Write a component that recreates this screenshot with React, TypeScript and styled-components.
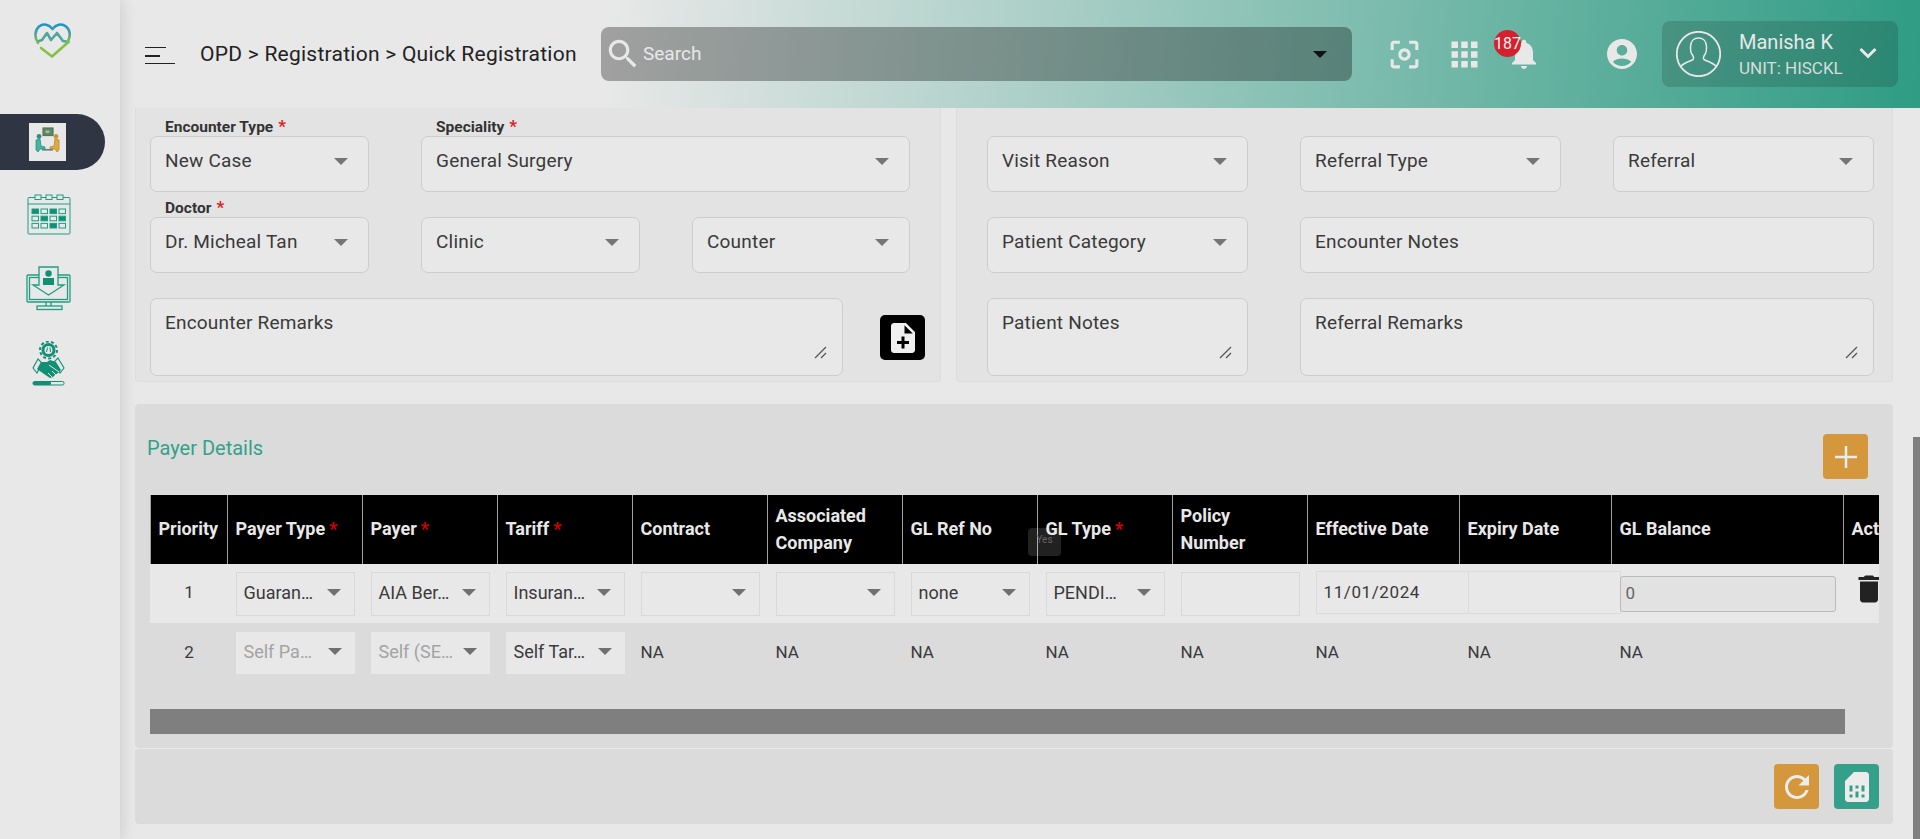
import React from "react";
import styled, { createGlobalStyle } from "styled-components";

const Global = createGlobalStyle`
  html, body { margin: 0; padding: 0; height: 100%; overflow: hidden; background: #e8e8e8; }
  body { font-family: Roboto, "Liberation Sans", sans-serif; color: #333; }
  #root { height: 100%; }
  * { box-sizing: border-box; }
`;

const Page = styled.div`
  display: flex;
  width: 1920px;
  height: 839px;
  position: relative;
  overflow: hidden;
`;
const Sidebar = styled.aside`
  width: 120px;
  flex: none;
  background: #e8e8e8;
  display: flex;
  flex-direction: column;
  padding-top: 23px;
  box-shadow: 2px 0 14px rgba(0, 0, 0, 0.12);
  position: relative;
  z-index: 2;
`;
const Logo = styled.div`
  width: 37px;
  height: 35px;
  margin-left: 34px;
  line-height: 0;
`;
const ActiveNav = styled.div`
  margin-top: 56px;
  width: 105px;
  height: 56px;
  background: #2f3542;
  border-radius: 0 28px 28px 0;
  padding: 9px 0 0 29px;
`;
const ActiveIcon = styled.div`
  width: 37px;
  height: 38px;
  background: #e8e8e8;
  line-height: 0;
`;
const NavIcon = styled.div<{ $top: number; $left: number }>`
  margin-top: ${(p) => p.$top}px;
  margin-left: ${(p) => p.$left}px;
  line-height: 0;
`;
const Main = styled.main`
  flex: 1;
  min-width: 0;
  display: flex;
  flex-direction: column;
`;
const Header = styled.header`
  height: 108px;
  flex: none;
  display: flex;
  align-items: center;
  padding-left: 25px;
  background: linear-gradient(95deg, #e8e8e8 27%, #2f9c84 100%);
`;
const Burger = styled.div`
  width: 30px;
  height: 17px;
  display: flex;
  flex-direction: column;
  justify-content: space-between;
  margin-top: 3px;
`;
const BurgerLine = styled.span<{ $w: number; $h: number }>`
  display: block;
  width: ${(p) => p.$w}px;
  height: ${(p) => p.$h}px;
  background: #222;
`;
const Crumbs = styled.div`
  margin-left: 25px;
  width: 376px;
  font-size: 21px;
  letter-spacing: 0.25px;
  color: #222;
  white-space: nowrap;
`;
const Search = styled.div`
  width: 751px;
  height: 54px;
  margin-left: 25px;
  border-radius: 8px;
  background: rgba(0, 0, 0, 0.31);
  display: flex;
  align-items: center;
  padding: 0 25px 0 3px;
  color: #e8e8e8;
  font-size: 19px;
`;
const SearchText = styled.span`
  flex: 1;
  margin: -2px 0 0 1px;
  color: #e8e8e8;
`;
const SearchCaret = styled.span`
  width: 0;
  height: 0;
  border-left: 7px solid transparent;
  border-right: 7px solid transparent;
  border-top: 7px solid #111;
`;
const HeaderIcon = styled.div<{ $left: number }>`
  margin-left: ${(p) => p.$left}px;
  position: relative;
  line-height: 0;
  color: #e8e8e8;
`;
const ChevronBox = styled(HeaderIcon)`
  margin-top: -3px;
  margin-right: 21px;
`;
const Badge = styled.span`
  position: absolute;
  left: -12px;
  top: -6px;
  width: 27px;
  height: 27px;
  border-radius: 50%;
  background: #d5202e;
  color: #f2f2f2;
  font-size: 16px;
  line-height: 27px;
  text-align: center;
  white-space: nowrap;
`;
const UserBox = styled.div`
  margin-left: 22px;
  width: 236px;
  height: 66px;
  border-radius: 8px;
  background: rgba(0, 0, 0, 0.14);
  display: flex;
  align-items: center;
  padding-left: 14px;
  color: #e8e8e8;
`;
const UserText = styled.div`
  margin-left: 18px;
  flex: 1;
  display: flex;
  flex-direction: column;
`;
const UserName = styled.span`
  font-size: 20px;
  line-height: 26px;
`;
const UserUnit = styled.span`
  font-size: 17px;
  line-height: 22px;
  margin-top: 2px;
  color: #d6dedb;
`;
const Content = styled.div`
  padding-left: 15px;
  width: 1773px;
  display: flex;
  flex-direction: column;
`;
const TopRow = styled.div`
  display: flex;
  gap: 15px;
  height: 274px;
`;
const Panel = styled.section<{ $w: number; $pl: number }>`
  width: ${(p) => p.$w}px;
  background: #e3e3e3;
  border: 1px solid #dddddd;
  border-top: none;
  border-radius: 0 0 4px 4px;
  padding: 28px 0 0 ${(p) => p.$pl - 1}px;
  display: flex;
  flex-direction: column;
  gap: 25px;
`;
const FormRow = styled.div<{ $gap?: number }>`
  display: flex;
  gap: ${(p) => p.$gap ?? 52}px;
`;
const Field = styled.div<{ $w: number; $tall?: boolean }>`
  position: relative;
  width: ${(p) => p.$w}px;
  height: ${(p) => (p.$tall ? 78 : 56)}px;
  flex: none;
  background: #e8e8e8;
  border: 1px solid #cdcdcd;
  border-radius: 7px;
  padding: 0 20px 0 14px;
  display: flex;
  align-items: flex-start;
  justify-content: space-between;
  font-size: 19px;
  line-height: 48px;
  letter-spacing: 0.2px;
  color: #3a3a3a;
`;
const FloatLabel = styled.label`
  position: absolute;
  left: 7px;
  top: -20px;
  padding: 0 7px;
  height: 22px;
  font-size: 15.5px;
  line-height: 18px;
  font-weight: 700;
  letter-spacing: 0;
  color: #333;
  white-space: nowrap;
  background: linear-gradient(to bottom, transparent 20px, #e8e8e8 20px);
`;
const Star = styled.span`
  color: #e02020;
  margin-left: 5px;
  font-size: 17px;
`;
const Caret = styled.span`
  flex: none;
  width: 0;
  height: 0;
  margin-top: 21px;
  border-left: 7px solid transparent;
  border-right: 7px solid transparent;
  border-top: 7px solid #757575;
`;
const Resize = styled.svg`
  position: absolute;
  right: 15px;
  bottom: 16px;
`;
const NoteIconButton = styled.div`
  width: 45px;
  height: 45px;
  margin-top: 17px;
  background: #000;
  border-radius: 5px;
  line-height: 0;
  color: #f0f0f0;
  display: flex;
  align-items: center;
  justify-content: center;
`;
const PayerCard = styled.section`
  margin-top: 22px;
  height: 344px;
  background: #dbdbdb;
  border-radius: 4px;
  display: flex;
  flex-direction: column;
  padding: 30px 25px 0 12px;
`;
const PayerHead = styled.div`
  display: flex;
  justify-content: space-between;
  align-items: flex-start;
`;
const PayerTitle = styled.h2`
  margin: 0;
  font-size: 20px;
  line-height: 28px;
  font-weight: 400;
  color: #35a08a;
`;
const SquareButton = styled.div<{ $bg: string }>`
  width: 45px;
  height: 45px;
  border-radius: 4px;
  background: ${(p) => p.$bg};
  color: #ececec;
  display: flex;
  align-items: center;
  justify-content: center;
  line-height: 0;
`;
const TableClip = styled.div`
  margin: 16px 0 0 3px;
  width: 1729px;
  overflow: hidden;
  position: relative;
`;
const Grid = styled.div`
  display: grid;
  width: 1840px;
  grid-template-columns: 77px repeat(8, 135px) 152px 152px 232px 150px;
`;
const HeadCell = styled.div`
  height: 69px;
  background: #000;
  border-left: 1px solid #a0a0a0;
  color: #e8e8e8;
  font-size: 18px;
  font-weight: 700;
  line-height: 27px;
  padding: 0 0 2px 7.5px;
  display: flex;
  align-items: center;
  white-space: nowrap;
`;
const HeadLabel = styled.span`
  white-space: pre-line;
`;
const HeadStar = styled.span`
  color: #d40000;
  margin-left: 4px;
`;
const BodyCell = styled.div<{ $row: 1 | 2 }>`
  background: ${(p) => (p.$row === 1 ? "#e8e8e8" : "transparent")};
  height: ${(p) => (p.$row === 1 ? 59 : 86)}px;
  padding: 8px 7.5px 0 8.5px;
  min-width: 0;
  font-size: 17px;
  color: #3a3a3a;
  line-height: 42px;
`;
const PriorityCell = styled(BodyCell)`
  text-align: center;
  padding-left: 1px;
  padding-right: 0;
  padding-top: ${(p) => (p.$row === 1 ? "7px" : "8px")};
`;
const SelectRow = styled(BodyCell)`
  padding-top: ${(p) => (p.$row === 1 ? "8px" : "9px")};
`;
const CellSelect = styled.div<{ $row: 1 | 2; $muted?: boolean }>`
  height: ${(p) => (p.$row === 1 ? 44 : 42)}px;
  background: #e8e8e8;
  border: ${(p) => (p.$row === 1 ? "1px solid #d9d9d9" : "none")};
  padding: 0 13px 0 ${(p) => (p.$row === 1 ? 7 : 8)}px;
  display: flex;
  align-items: center;
  justify-content: space-between;
  color: ${(p) => (p.$muted ? "#a3a3a3" : "#3a3a3a")};
  font-size: 18px;
`;
const CellValue = styled.span`
  white-space: nowrap;
  margin-top: -3px;
`;
const SmallCaret = styled.span`
  flex: none;
  width: 0;
  height: 0;
  margin-top: -3px;
  border-left: 7px solid transparent;
  border-right: 7px solid transparent;
  border-top: 7px solid #707070;
`;
const PlainInput = styled.div`
  height: 44px;
  border: 1px solid #d9d9d9;
  background: #e8e8e8;
`;
const DateCell = styled.div`
  width: 153px;
  height: 43px;
  margin-top: -1px;
  border: 1px solid #dcdcdc;
  background: #e8e8e8;
  padding-left: 7px;
  font-size: 17px;
  letter-spacing: 0.6px;
  line-height: 40px;
  position: relative;
`;
const BalanceInput = styled.div`
  height: 36px;
  margin-top: 4px;
  background: #e2e2e2;
  border: 1px solid #bbbbbb;
  border-radius: 3px;
  padding-left: 5px;
  font-size: 17px;
  line-height: 32px;
  color: #666;
  position: relative;
`;
const TrashCell = styled.div`
  background: #e8e8e8;
  height: 59px;
  padding: 7px 0 0 7.5px;
  line-height: 0;
  color: #222;
`;
const ScrollBar = styled.div`
  width: 1695px;
  height: 25px;
  background: #7f7f7f;
`;
const YesTip = styled.div`
  position: absolute;
  left: 878px;
  top: 33px;
  width: 33px;
  height: 28px;
  border-radius: 4px;
  background: rgba(255, 255, 255, 0.13);
  color: #666;
  font-size: 10px;
  line-height: 24px;
  text-align: center;
`;
const FooterCard = styled.section`
  margin-top: 1px;
  height: 75px;
  background: #dbdbdb;
  border-radius: 4px;
  display: flex;
  justify-content: flex-end;
  align-items: center;
  gap: 15px;
  padding-right: 14px;
`;
const PageThumb = styled.div`
  position: absolute;
  right: 0;
  top: 437px;
  bottom: 0;
  width: 7px;
  background: #7f7f7f;
  z-index: 5;
`;

const teal = "#1f9c82";
const deep = "#0f8f74";

const LogoMark = () => (
  <svg width="37" height="35" viewBox="0 0 37 35" fill="none" strokeWidth="2.6" strokeLinejoin="round" strokeLinecap="round">
    <defs>
      <linearGradient id="lg" x1="0" y1="0" x2="0" y2="1">
        <stop offset="0" stopColor="#1f93c9" />
        <stop offset="0.5" stopColor="#4fa39a" />
        <stop offset="1" stopColor="#84c23f" />
      </linearGradient>
    </defs>
    <path d="M4 20 C0 14 1 7 5 3.5 C9.5 0 15 1.5 18.5 6 C22 1.5 27.5 0 32 3.5 C36 7 36.5 12 34.5 17" stroke="url(#lg)" />
    <path d="M5 18 L8 17 L13 10 L17 17 L23 10 L29 18 L34.5 19" stroke="#4fa69a" />
    <path d="M34.5 19 L18 33.5 L7 25" stroke="#84c23f" />
  </svg>
);

const MeetingIcon = () => (
  <svg width="37" height="38" viewBox="0 0 37 38" fill="none">
    <rect x="14" y="5" width="10" height="7.5" fill="#3f8f88" stroke="#6b6f4a" strokeWidth="1.2" />
    <rect x="16.5" y="7.5" width="4" height="2.5" fill="#e0b040" />
    <circle cx="10" cy="13.5" r="2.4" fill="#2c8f86" />
    <circle cx="27" cy="13.5" r="2.4" fill="#c99836" />
    <path d="M7 17 L11 16 L12 23 L16 24 V26 H11 L9 29 L7 27 Z" fill="#42b79a" stroke="#2c8f86" strokeWidth="0.8" />
    <path d="M30 17 L26 16 L25 23 L21 24 V26 H26 L28 29 L30 27 Z" fill="#e3a83a" stroke="#b48a2f" strokeWidth="0.8" />
    <rect x="13" y="26" width="11" height="1.6" fill="#5f7f9a" />
  </svg>
);

const Calendar = () => {
  const cells = [1, 0, 1, 0, 0, 1, 0, 1, 0, 0, 1, 0];
  return (
    <svg width="44" height="41" viewBox="0 0 44 41" fill="none" stroke={teal} strokeWidth="1">
      <rect x="1" y="3.5" width="42" height="36.5" rx="1" />
      <line x1="1" y1="10" x2="43" y2="10" />
      <rect x="8" y="1" width="6" height="4.5" fill="#e8e8e8" />
      <rect x="19" y="1" width="6" height="4.5" fill="#e8e8e8" />
      <rect x="30" y="1" width="6" height="4.5" fill="#e8e8e8" />
      {cells.map((c, i) => (
        <rect key={i} x={5 + (i % 4) * 9} y={15 + Math.floor(i / 4) * 7.2} width="6.5" height="4.6" fill={c ? deep : "none"} />
      ))}
    </svg>
  );
};

const Monitor = () => (
  <svg width="45" height="45" viewBox="0 0 45 45" fill="none" stroke={teal} strokeWidth="1.3">
    <rect x="1" y="9" width="43" height="27" rx="1" />
    <rect x="3.5" y="11.5" width="38" height="22" />
    <path d="M13 1 H32 V19 H38 L22.5 29 L7 19 H13 Z" fill="#e8e8e8" />
    <circle cx="22.5" cy="7.5" r="3.2" fill={deep} stroke="none" />
    <path d="M17 12 H28 V19 H17 Z" fill={deep} stroke="none" />
    <path d="M20 36 V40 M25 36 V40" />
    <rect x="11" y="40" width="25" height="3.5" />
  </svg>
);

const Handshake = () => (
  <svg width="33" height="45" viewBox="0 0 33 45" fill="none">
    <circle cx="16.5" cy="9" r="7" fill={deep} />
    <circle cx="16.5" cy="9" r="8.5" stroke={deep} strokeWidth="2" strokeDasharray="3 2.3" />
    <circle cx="16.5" cy="9" r="4" fill="#e8e8e8" />
    <path d="M15.5 6.5 L14.5 11 M18 6.5 L18.5 11" stroke={deep} strokeWidth="1" />
    <path d="M6 18 L1 27 L5 32 L10 22 Z" fill="#e8e8e8" stroke={deep} strokeWidth="1.1" />
    <path d="M26 17 L32 27 L28 32 L22 21 Z" fill="#e8e8e8" stroke={deep} strokeWidth="1.1" />
    <path d="M9 21 H15 L18 19 L24 21 L29 29 L26 32 L23 34 L21 36 L18 37 L12 33 L5 28 Z" fill={deep} />
    <path d="M17 24 L27 31 M20 30 L24 34 M16 32 L20 36" stroke="#e8e8e8" strokeWidth="1" />
    <rect x="1" y="40.5" width="31" height="3.5" rx="1.5" fill="#e8e8e8" stroke={deep} strokeWidth="1" />
    <rect x="1" y="40.5" width="18" height="3.5" rx="1.5" fill={deep} />
  </svg>
);

const MuiIcon = ({ d, size }: { d: string; size: number }) => (
  <svg width={size} height={size} viewBox="0 0 24 24" fill="currentColor">
    <path d={d} />
  </svg>
);

const Avatar = () => (
  <svg width="45" height="46" viewBox="0 0 45 46" fill="none" stroke="#e8e8e8" strokeWidth="1.5">
    <ellipse cx="22.5" cy="23" rx="21.7" ry="22.2" strokeWidth="1.8" />
    <path d="M4.5 36 C8 31 13 31 17 28.5 C18 27 17.5 25.5 16.5 24 C15 22.5 14.5 19 14.5 16 C14.5 10 18 7 22.5 7 C27 7 30.5 10 30.5 16 C30.5 19 30 22.5 28.5 24 C27.5 25.5 27 27 28 28.5 C32 31 37 31 40.5 36" />
  </svg>
);

const FormSelect = ({ w, value, label }: { w: number; value: string; label?: string }) => (
  <Field $w={w}>
    {label && (
      <FloatLabel>
        {label}
        <Star>*</Star>
      </FloatLabel>
    )}
    <span>{value}</span>
    <Caret />
  </Field>
);

const TextArea = ({ w, value }: { w: number; value: string }) => (
  <Field $w={w} $tall>
    <span>{value}</span>
    <Resize width="13" height="13" viewBox="0 0 13 13" stroke="#555" strokeWidth="1.3">
      <line x1="1" y1="12" x2="12" y2="1" />
      <line x1="7" y1="12" x2="12" y2="7" />
    </Resize>
  </Field>
);

const columns: { label: string; star?: boolean }[] = [
  { label: "Priority" },
  { label: "Payer Type", star: true },
  { label: "Payer", star: true },
  { label: "Tariff", star: true },
  { label: "Contract" },
  { label: "Associated\nCompany" },
  { label: "GL Ref No" },
  { label: "GL Type", star: true },
  { label: "Policy\nNumber" },
  { label: "Effective Date" },
  { label: "Expiry Date" },
  { label: "GL Balance" },
  { label: "Actions" },
];

const RowSelect = ({ row, value, muted }: { row: 1 | 2; value: string; muted?: boolean }) => (
  <SelectRow $row={row}>
    <CellSelect $row={row} $muted={muted}>
      <CellValue>{value}</CellValue>
      <SmallCaret />
    </CellSelect>
  </SelectRow>
);

export default function App() {
  return (
    <Page>
      <Global />
      <Sidebar>
        <Logo>
          <LogoMark />
        </Logo>
        <ActiveNav>
          <ActiveIcon>
            <MeetingIcon />
          </ActiveIcon>
        </ActiveNav>
        <NavIcon $top={24} $left={27}>
          <Calendar />
        </NavIcon>
        <NavIcon $top={31} $left={26}>
          <Monitor />
        </NavIcon>
        <NavIcon $top={30} $left={32}>
          <Handshake />
        </NavIcon>
      </Sidebar>
      <Main>
        <Header>
          <Burger>
            <BurgerLine $w={21} $h={1} />
            <BurgerLine $w={15} $h={2} />
            <BurgerLine $w={30} $h={1} />
          </Burger>
          <Crumbs>OPD &gt; Registration &gt; Quick Registration</Crumbs>
          <Search>
            <MuiIcon size={38} d="M15.5 14h-.79l-.28-.27C15.41 12.59 16 11.11 16 9.5 16 5.91 13.09 3 9.5 3S3 5.91 3 9.5 5.91 16 9.5 16c1.61 0 3.09-.59 4.23-1.57l.27.28v.79l5 4.99L20.49 19l-4.99-5zm-6 0C7.01 14 5 11.99 5 9.5S7.01 5 9.5 5 14 7.01 14 9.5 11.99 14 9.5 14z" />
            <SearchText>Search</SearchText>
            <SearchCaret />
          </Search>
          <HeaderIcon $left={34}>
            <MuiIcon size={37} d="M5 15H3v4c0 1.1.9 2 2 2h4v-2H5v-4zM5 5h4V3H5c-1.1 0-2 .9-2 2v4h2V5zm14-2h-4v2h4v4h2V5c0-1.1-.9-2-2-2zm0 16h-4v2h4c1.1 0 2-.9 2-2v-4h-2v4zM12 8c-2.21 0-4 1.79-4 4s1.79 4 4 4 4-1.79 4-4-1.79-4-4-4zm0 6c-1.1 0-2-.9-2-2s.9-2 2-2 2 .9 2 2-.9 2-2 2z" />
          </HeaderIcon>
          <HeaderIcon $left={22}>
            <MuiIcon size={39} d="M4 8h4V4H4v4zm6 12h4v-4h-4v4zm-6 0h4v-4H4v4zm0-6h4v-4H4v4zm6 0h4v-4h-4v4zm6-10v4h4V4h-4zm-6 4h4V4h-4v4zm6 6h4v-4h-4v4zm0 6h4v-4h-4v4z" />
          </HeaderIcon>
          <HeaderIcon $left={22}>
            <MuiIcon size={36} d="M12 22c1.1 0 2-.9 2-2h-4c0 1.1.89 2 2 2zm6-6v-5c0-3.07-1.64-5.64-4.5-6.32V4c0-.83-.67-1.5-1.5-1.5s-1.5.67-1.5 1.5v.68C7.63 5.36 6 7.92 6 11v5l-2 2v1h16v-1l-2-2z" />
            <Badge>187</Badge>
          </HeaderIcon>
          <HeaderIcon $left={62}>
            <MuiIcon size={36} d="M12 2C6.48 2 2 6.48 2 12s4.48 10 10 10 10-4.48 10-10S17.52 2 12 2zm0 4c1.93 0 3.5 1.57 3.5 3.5S13.93 13 12 13s-3.5-1.57-3.5-3.5S10.07 6 12 6zm0 14c-2.03 0-4.43-.82-6.14-2.88C7.55 15.8 9.68 15 12 15s4.45.8 6.14 2.12C16.43 19.18 14.03 20 12 20z" />
          </HeaderIcon>
          <UserBox>
            <Avatar />
            <UserText>
              <UserName>Manisha K</UserName>
              <UserUnit>UNIT: HISCKL</UserUnit>
            </UserText>
            <ChevronBox $left={0}>
              <svg width="18" height="12" viewBox="0 0 18 12" fill="none" stroke="#e8e8e8" strokeWidth="3">
                <path d="M1.5 2 L9 9.5 L16.5 2" />
              </svg>
            </ChevronBox>
          </UserBox>
        </Header>
        <Content>
          <TopRow>
            <Panel $w={806} $pl={15}>
              <FormRow>
                <FormSelect w={219} value="New Case" label="Encounter Type" />
                <FormSelect w={489} value="General Surgery" label="Speciality" />
              </FormRow>
              <FormRow>
                <FormSelect w={219} value="Dr. Micheal Tan" label="Doctor" />
                <FormSelect w={219} value="Clinic" />
                <FormSelect w={218} value="Counter" />
              </FormRow>
              <FormRow $gap={37}>
                <TextArea w={693} value="Encounter Remarks" />
                <NoteIconButton>
                  <MuiIcon size={36} d="M14 2H6c-1.1 0-1.99.9-1.99 2L4 20c0 1.1.89 2 1.99 2H18c1.1 0 2-.9 2-2V8l-6-6zm2 14h-3v3h-2v-3H8v-2h3v-3h2v3h3v2zm-3-7V3.5L18.5 9H13z" />
                </NoteIconButton>
              </FormRow>
            </Panel>
            <Panel $w={937} $pl={31}>
              <FormRow>
                <FormSelect w={261} value="Visit Reason" />
                <FormSelect w={261} value="Referral Type" />
                <FormSelect w={261} value="Referral" />
              </FormRow>
              <FormRow>
                <FormSelect w={261} value="Patient Category" />
                <Field $w={574}>
                  <span>Encounter Notes</span>
                </Field>
              </FormRow>
              <FormRow>
                <TextArea w={261} value="Patient Notes" />
                <TextArea w={574} value="Referral Remarks" />
              </FormRow>
            </Panel>
          </TopRow>
          <PayerCard>
            <PayerHead>
              <PayerTitle>Payer Details</PayerTitle>
              <SquareButton $bg="#d4973c">
                <svg width="22" height="22" viewBox="0 0 22 22" stroke="#ececec" strokeWidth="2.5">
                  <line x1="11" y1="0" x2="11" y2="22" />
                  <line x1="0" y1="11" x2="22" y2="11" />
                </svg>
              </SquareButton>
            </PayerHead>
            <TableClip>
              <Grid>
                {columns.map((c) => (
                  <HeadCell key={c.label}>
                    <HeadLabel>{c.label}</HeadLabel>
                    {c.star && <HeadStar>*</HeadStar>}
                  </HeadCell>
                ))}
                <PriorityCell $row={1}>1</PriorityCell>
                <RowSelect row={1} value="Guaran…" />
                <RowSelect row={1} value="AIA Ber…" />
                <RowSelect row={1} value="Insuran…" />
                <RowSelect row={1} value="" />
                <RowSelect row={1} value="" />
                <RowSelect row={1} value="none" />
                <RowSelect row={1} value="PENDI…" />
                <BodyCell $row={1}>
                  <PlainInput />
                </BodyCell>
                <BodyCell $row={1}>
                  <DateCell>11/01/2024</DateCell>
                </BodyCell>
                <BodyCell $row={1}>
                  <DateCell />
                </BodyCell>
                <BodyCell $row={1}>
                  <BalanceInput>0</BalanceInput>
                </BodyCell>
                <TrashCell>
                  <MuiIcon size={36} d="M6 19c0 1.1.9 2 2 2h8c1.1 0 2-.9 2-2V7H6v12zM19 4h-3.5l-1-1h-5l-1 1H5v2h14V4z" />
                </TrashCell>
                <PriorityCell $row={2}>2</PriorityCell>
                <RowSelect row={2} value="Self Pa…" muted />
                <RowSelect row={2} value="Self (SE…" muted />
                <RowSelect row={2} value="Self Tar…" />
                {Array.from({ length: 8 }).map((_, i) => (
                  <BodyCell $row={2} key={i}>
                    NA
                  </BodyCell>
                ))}
                <BodyCell $row={2} />
              </Grid>
              <YesTip>Yes</YesTip>
              <ScrollBar />
            </TableClip>
          </PayerCard>
          <FooterCard>
            <SquareButton $bg="#d4973c">
              <MuiIcon size={36} d="M17.65 6.35C16.2 4.9 14.21 4 12 4c-4.42 0-7.99 3.58-7.99 8s3.57 8 7.99 8c3.73 0 6.84-2.55 7.73-6h-2.08c-.82 2.33-3.04 4-5.65 4-3.31 0-6-2.69-6-6s2.69-6 6-6c1.66 0 3.14.69 4.22 1.78L13 11h7V4l-2.35 2.35z" />
            </SquareButton>
            <SquareButton $bg="#35a08a">
              <MuiIcon size={36} d="M19.99 4c0-1.1-.89-2-1.99-2h-8L4 8v12c0 1.1.9 2 2 2h12c1.1 0 2-.9 2-2l-.01-16zM9 19H7v-2h2v2zm8 0h-2v-2h2v2zm-8-4H7v-4h2v4zm4 4h-2v-4h2v4zm0-6h-2v-2h2v2zm4 2h-2v-4h2v4z" />
            </SquareButton>
          </FooterCard>
        </Content>
      </Main>
      <PageThumb />
    </Page>
  );
}
